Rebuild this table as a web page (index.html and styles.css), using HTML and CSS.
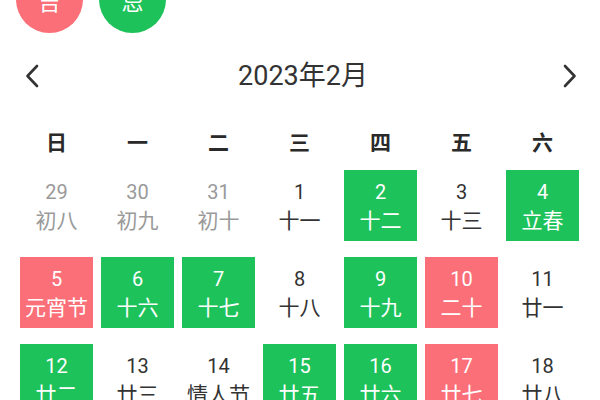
FILE: index.html
```html
<!DOCTYPE html>
<html lang="zh-CN">
<head>
<meta charset="utf-8">
<title>日历</title>
<link rel="stylesheet" href="styles.css">
</head>
<body>
<div class="page">
  <div class="tags">
    <span class="tag tag-good">吉</span>
    <span class="tag tag-bad">忌</span>
  </div>
  <div class="header">
    <button class="nav" aria-label="上个月">
      <svg width="14" height="24" viewBox="0 0 14 24"><path d="M12 2 L2.5 12 L12 22" fill="none" stroke="#333" stroke-width="2.6" stroke-linecap="round" stroke-linejoin="round"/></svg>
    </button>
    <div class="title">2023年2月</div>
    <button class="nav" aria-label="下个月">
      <svg width="14" height="24" viewBox="0 0 14 24"><path d="M2 2 L11.5 12 L2 22" fill="none" stroke="#333" stroke-width="2.6" stroke-linecap="round" stroke-linejoin="round"/></svg>
    </button>
  </div>
  <div class="weekdays">
    <span>日</span><span>一</span><span>二</span><span>三</span><span>四</span><span>五</span><span>六</span>
  </div>
  <div class="grid">
    <div class="cell other"><span class="num">29</span><span class="lunar">初八</span></div>
    <div class="cell other"><span class="num">30</span><span class="lunar">初九</span></div>
    <div class="cell other"><span class="num">31</span><span class="lunar">初十</span></div>
    <div class="cell"><span class="num">1</span><span class="lunar">十一</span></div>
    <div class="cell good"><span class="num">2</span><span class="lunar">十二</span></div>
    <div class="cell"><span class="num">3</span><span class="lunar">十三</span></div>
    <div class="cell good"><span class="num">4</span><span class="lunar">立春</span></div>

    <div class="cell bad"><span class="num">5</span><span class="lunar">元宵节</span></div>
    <div class="cell good"><span class="num">6</span><span class="lunar">十六</span></div>
    <div class="cell good"><span class="num">7</span><span class="lunar">十七</span></div>
    <div class="cell"><span class="num">8</span><span class="lunar">十八</span></div>
    <div class="cell good"><span class="num">9</span><span class="lunar">十九</span></div>
    <div class="cell bad"><span class="num">10</span><span class="lunar">二十</span></div>
    <div class="cell"><span class="num">11</span><span class="lunar">廿一</span></div>

    <div class="cell good"><span class="num">12</span><span class="lunar">廿二</span></div>
    <div class="cell"><span class="num">13</span><span class="lunar">廿三</span></div>
    <div class="cell"><span class="num">14</span><span class="lunar">情人节</span></div>
    <div class="cell good"><span class="num">15</span><span class="lunar">廿五</span></div>
    <div class="cell good"><span class="num">16</span><span class="lunar">廿六</span></div>
    <div class="cell bad"><span class="num">17</span><span class="lunar">廿七</span></div>
    <div class="cell"><span class="num">18</span><span class="lunar">廿八</span></div>

    <div class="cell"><span class="num">19</span><span class="lunar">雨水</span></div>
    <div class="cell"><span class="num">20</span><span class="lunar">初一</span></div>
    <div class="cell"><span class="num">21</span><span class="lunar">初二</span></div>
    <div class="cell"><span class="num">22</span><span class="lunar">初三</span></div>
    <div class="cell"><span class="num">23</span><span class="lunar">初四</span></div>
    <div class="cell"><span class="num">24</span><span class="lunar">初五</span></div>
    <div class="cell"><span class="num">25</span><span class="lunar">初六</span></div>
  </div>
</div>
</body>
</html>
```
FILE: styles.css
```css
html, body {
  margin: 0;
  padding: 0;
  overflow: hidden;
  background: #ffffff;
}

body {
  font-family: Roboto, "Noto Sans CJK SC", sans-serif;
  color: #333333;
}

.page {
  width: 600px;
  height: 400px;
  overflow: hidden;
  padding: 0 21px 0 20px;
  box-sizing: border-box;
}

.tags {
  display: flex;
  gap: 16px;
  margin-top: -34px;
  margin-left: -4px;
}

.tag {
  width: 67px;
  height: 67px;
  border-radius: 50%;
  display: flex;
  align-items: center;
  justify-content: center;
  color: #ffffff;
  font-size: 22px;
  font-family: "Noto Sans CJK SC", sans-serif;
}

.tag-good {
  background: #fb6f78;
}

.tag-bad {
  background: #1ec25b;
}

.header {
  display: flex;
  align-items: center;
  justify-content: space-between;
  height: 46px;
  margin-top: 20px;
}

.nav {
  border: 0;
  background: none;
  padding: 0;
  width: 24px;
  height: 46px;
  display: flex;
  align-items: center;
  justify-content: center;
}

.nav:last-child {
  margin-right: -3px;
}

.title {
  font-size: 27px;
  line-height: 46px;
  color: #333333;
  margin-left: 4px;
}

.weekdays {
  display: grid;
  grid-template-columns: repeat(7, 73px);
  column-gap: 8px;
  margin-top: 27px;
  height: 30px;
}

.weekdays span {
  text-align: center;
  font-family: "Noto Sans CJK SC", sans-serif;
  font-size: 21px;
  font-weight: 700;
  line-height: 30px;
  color: #2a2a2a;
}

.grid {
  display: grid;
  grid-template-columns: repeat(7, 73px);
  grid-auto-rows: 71px;
  column-gap: 8px;
  row-gap: 16px;
  margin-top: 14px;
}

.cell {
  display: flex;
  flex-direction: column;
  align-items: center;
  justify-content: center;
  color: #333333;
}

.num {
  font-size: 20px;
  line-height: 27px;
}

.lunar {
  font-family: "Noto Sans CJK SC", sans-serif;
  font-size: 21px;
  line-height: 27px;
  white-space: nowrap;
}

.cell.other {
  color: #9a9a9a;
}

.cell.good {
  background: #1ec25b;
  color: #ffffff;
}

.cell.bad {
  background: #fb6f78;
  color: #ffffff;
}
```
